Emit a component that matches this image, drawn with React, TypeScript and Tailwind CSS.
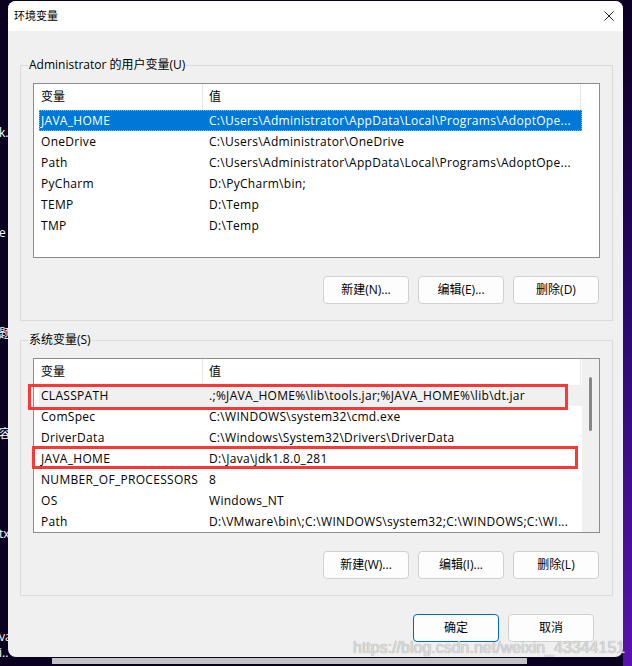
import React from "react";

type Row = [string, string];

const userVars: Row[] = [
  ["JAVA_HOME", "C:\\Users\\Administrator\\AppData\\Local\\Programs\\AdoptOpe..."],
  ["OneDrive", "C:\\Users\\Administrator\\OneDrive"],
  ["Path", "C:\\Users\\Administrator\\AppData\\Local\\Programs\\AdoptOpe..."],
  ["PyCharm", "D:\\PyCharm\\bin;"],
  ["TEMP", "D:\\Temp"],
  ["TMP", "D:\\Temp"],
];

const systemVars: Row[] = [
  ["CLASSPATH", ".;%JAVA_HOME%\\lib\\tools.jar;%JAVA_HOME%\\lib\\dt.jar"],
  ["ComSpec", "C:\\WINDOWS\\system32\\cmd.exe"],
  ["DriverData", "C:\\Windows\\System32\\Drivers\\DriverData"],
  ["JAVA_HOME", "D:\\Java\\jdk1.8.0_281"],
  ["NUMBER_OF_PROCESSORS", "8"],
  ["OS", "Windows_NT"],
  ["Path", "D:\\VMware\\bin\\;C:\\WINDOWS\\system32;C:\\WINDOWS;C:\\WI..."],
];

const Button: React.FC<{ children: React.ReactNode; primary?: boolean }> = ({ children, primary }) => (
  <div
    className={
      "flex h-[28px] w-[86px] items-center justify-center rounded-[4px] border bg-[#fdfdfd] text-[12px] text-black " +
      (primary ? "border-[#0067c0]" : "border-[#d0d0d0]")
    }
  >
    {children}
  </div>
);

const VarList: React.FC<{ rows: Row[]; selected?: number; hover?: number; scroll?: boolean }> = ({
  rows,
  selected,
  hover,
  scroll,
}) => (
  <div className="flex h-[175px] overflow-hidden border border-[#8c8c8c] bg-white">
    <div className="flex w-[548px] flex-col">
      <div className="flex h-[26px] shrink-0 items-center">
        <div className="flex h-full w-[169px] items-center border-r border-[#e5e5e5] pl-[7px]">变量</div>
        <div className="flex h-full w-[378px] items-center border-r border-[#e5e5e5] pl-[6px]">值</div>
      </div>
      {rows.map(([name, value], i) => {
        const isSel = i === selected;
        const isHover = i === hover;
        return (
          <div key={name + i} className="flex h-[21px] shrink-0 pl-[5px]">
            <div
              className={
                "flex w-[543px] items-center whitespace-nowrap border tracking-[0.3px] " +
                (isSel
                  ? "border-dotted border-[#f0a040] bg-[#0078d7] text-white"
                  : isHover
                    ? "border-transparent bg-[#f0f0f0] text-black"
                    : "border-transparent text-black")
              }
            >
              <div className="w-[168px] shrink-0 overflow-hidden pl-[1px]">{name}</div>
              <div className="min-w-0 flex-1 overflow-hidden pl-[1px]">{value}</div>
            </div>
          </div>
        );
      })}
    </div>
    {scroll && (
      <div className="w-[17px] bg-[#f0f0f0] pl-[7px] pt-[18px]">
        <div className="h-[54px] w-[3px] rounded-full bg-[#868686]" />
      </div>
    )}
  </div>
);

const Group: React.FC<{ label: string; children: React.ReactNode; className?: string }> = ({
  label,
  children,
  className,
}) => (
  <div className={"border border-[#dadada] px-[12px] pb-[16px] " + (className ?? "")}>
    <div className="-ml-[5px] -mt-[9px] w-fit bg-[#f0f0f0] px-[1px] leading-[16px]">{label}</div>
    {children}
  </div>
);

// desktop icon captions peeking out on the left
const peeks = [
  { text: "k..", top: "mt-[125px]" },
  { text: "e", top: "mt-[84px]" },
  { text: "题", top: "mt-[85px]" },
  { text: "容", top: "mt-[84px]" },
  { text: "tx", top: "mt-[84px]" },
  { text: "va", top: "mt-[87px]" },
  { text: "i..", top: "mt-[0px]" },
];

export default function App() {
  return (
    <div className="relative flex h-[666px] w-[632px] overflow-hidden bg-[#0c0021] font-['Open_Sans','Noto_Sans_CJK_SC',sans-serif] text-[12px] text-black">
      <div className="flex w-[8px] shrink-0 flex-col overflow-hidden text-[12px] leading-[16px] text-white">
        {peeks.map((p) => (
          <div key={p.text} className={p.top + " -ml-[1px] whitespace-nowrap"}>
            {p.text}
          </div>
        ))}
      </div>

      <div className="flex w-[615px] shrink-0 flex-col">
        <div className="mt-[1px] flex h-[656px] flex-col overflow-hidden rounded-lg bg-[#f0f0f0]">
          <div className="flex h-[30px] shrink-0 items-center justify-between bg-white pl-[6px] pr-[9px]">
            <span className="text-[11px]">环境变量</span>
            <svg width="10" height="10" viewBox="0 0 10 10" className="mt-[-1px]">
              <path d="M0.5 0.5 L9.5 9.5 M9.5 0.5 L0.5 9.5" stroke="#1b1b1b" strokeWidth="1" />
            </svg>
          </div>

          <div className="flex flex-col pl-[12px] pr-[10px]">
            <Group label="Administrator 的用户变量(U)" className="mt-[34px]">
              <div className="mt-[10px]">
                <VarList rows={userVars} selected={0} />
              </div>
              <div className="mt-[18px] flex justify-end gap-[9px] pr-[1px]">
                <Button>新建(N)...</Button>
                <Button>编辑(E)...</Button>
                <Button>删除(D)</Button>
              </div>
            </Group>

            <Group label="系统变量(S)" className="mt-[19px]">
              <div className="mt-[10px]">
                <VarList rows={systemVars} hover={0} scroll />
              </div>
              <div className="mt-[18px] flex justify-end gap-[9px] pr-[1px]">
                <Button>新建(W)...</Button>
                <Button>编辑(I)...</Button>
                <Button>删除(L)</Button>
              </div>
            </Group>
          </div>

          <div className="mt-[18px] flex justify-end gap-[9px] pr-[29px]">
            <Button primary>确定</Button>
            <Button>取消</Button>
          </div>
        </div>
        <div className="ml-[44px] mt-[1px] h-[6px] w-[475px] bg-[#c3c3c3]" />
      </div>

      <div className="w-[9px] shrink-0 bg-gradient-to-b from-[#0c0021] via-[#2c0a74] to-[#5a12b0]" />

      {/* annotation boxes drawn over the system variable list */}
      <div className="absolute left-[28px] top-[384px] h-[26px] w-[540px] border-[3px] border-[#ff3636]" />
      <div className="absolute left-[32px] top-[446px] h-[23px] w-[546px] border-[3px] border-[#ff3636]" />

      <div className="absolute left-[353px] top-[638px] whitespace-nowrap font-['Liberation_Sans',sans-serif] text-[16px] leading-[20px] text-[#dcdcdc] [text-shadow:0_0_1px_#8f8f8f]">
        https://blog.csdn.net/weixin_43344151
      </div>
    </div>
  );
}
